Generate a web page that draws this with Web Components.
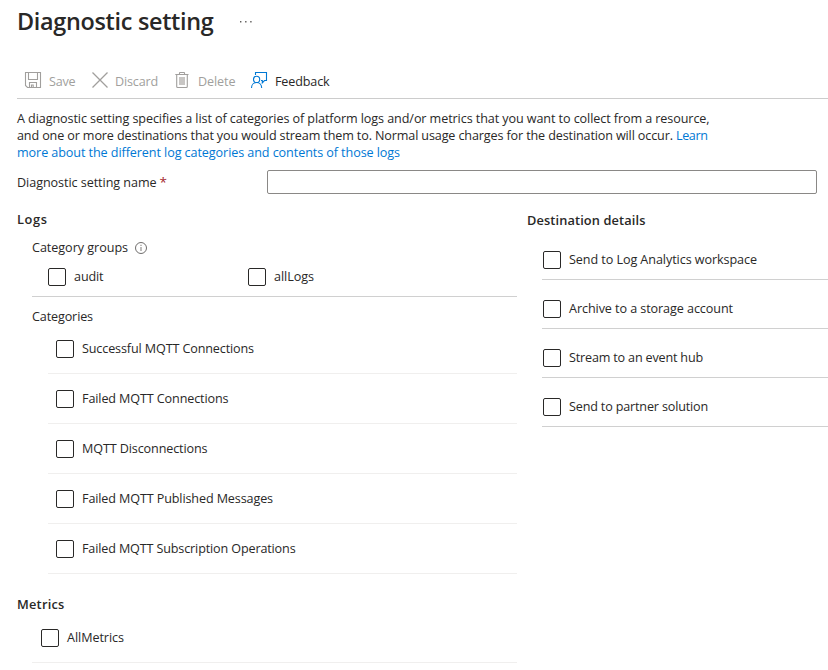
<!DOCTYPE html>
<html lang="en">
<head>
<meta charset="utf-8">
<title>Diagnostic setting</title>
<style>
html,body{margin:0;background:#fff}
body{width:828px;height:670px;overflow:hidden;font:12.6px/17px "Open Sans","Noto Sans",sans-serif;color:#292827}
</style>
</head>
<body>
<diagnostic-page></diagnostic-page>
<script>
const define = (name, html, setup) => customElements.define(name, class extends HTMLElement {
  constructor() {
    super();
    this.attachShadow({mode: 'open'}).innerHTML = html;
  }
  connectedCallback() { if (setup) setup(this, this.shadowRoot); }
});

// One line of text, tracked so that it fills the advance width given in "w".
define('ui-text', `<style>
:host{display:inline-block;white-space:pre;flex:none}
</style><span><slot></slot></span>`, (el, root) => {
  const span = root.querySelector('span');
  const w = +el.getAttribute('w');
  const natural = span.getBoundingClientRect().width;
  el.style.width = w + 'px';
  span.style.letterSpacing = ((w - natural) / el.textContent.length) + 'px';
});

define('ui-icon', `<style>
:host{display:block;flex:none}
svg{display:block;fill:none;overflow:visible}
</style><svg></svg>`, (el, root) => {
  const shapes = {
    save: [16, '<path d="M.5.5h15v15h-13l-2-2zM3.5.8v6.7h9V.8M4.5 15.3v-4.8h7v4.8M6.5 15.3v-2.3h1.7v2.3" stroke="#a19f9d" stroke-width="1.1"/>'],
    discard: [16, '<path d="M.5.5l15 15M15.5.5l-15 15" stroke="#a19f9d" stroke-width="1.3"/>'],
    trash: [14, '<path d="M.3 2.5h13.2M4.5 2.3V1q0-.5.5-.5h4q.5 0 .5.5v1.3M1.7 2.7V14.5q0 1 1 1h8.6q1 0 1-1V2.7" stroke="#a19f9d" stroke-width="1.1"/><path d="M4 5h6v8H4z" fill="#c8c6c4"/>'],
    feedback: [16, '<path d="M4.5 3V.5h11v8h-2l-2.2 2.3V8.5H10" stroke="#0078d4" stroke-width="1.1"/><circle cx="5.6" cy="7.4" r="3.1" stroke="#0078d4" stroke-width="1.1"/><path d="M.5 15.9c.2-7.2 10-7.2 10.2 0" stroke="#0078d4" stroke-width="1.1"/>'],
    info: [12, '<circle cx="6" cy="6" r="5.5" stroke="#605e5c" stroke-width=".9"/><path d="M6 5v4M6 2.8v1.1" stroke="#8a8886" stroke-width="1.1"/>'],
    more: [12, '<path d="M0 0h1.4v1.4H0zM5.1 0h1.4v1.4H5.1zM10.2 0h1.4v1.4h-1.4z" fill="#605e5c"/>']
  };
  const [w, art] = shapes[el.getAttribute('name')];
  const h = {info: 12, more: 2}[el.getAttribute('name')] || 16;
  const svg = root.querySelector('svg');
  svg.setAttribute('width', w);
  svg.setAttribute('height', h);
  svg.setAttribute('viewBox', `0 0 ${w} ${h}`);
  svg.innerHTML = art;
});

define('ui-check', `<style>
:host{display:flex;align-items:flex-start}
i{box-sizing:border-box;width:18px;height:18px;border:1px solid #292827;border-radius:2px;margin-right:8px;flex:none}
</style><i></i><slot></slot>`);

define('ui-command', `<style>
:host{display:flex;align-items:flex-start;color:#a19f9d}
:host([active]){color:#292827}
::slotted(ui-text){margin-top:1px}
</style><slot></slot>`);

define('ui-row', `<style>
:host{display:block;box-sizing:border-box;border-bottom:1px solid #f0efee}
:host([strong]){border-color:#d0d0d0}
</style><slot></slot>`);

define('ui-heading', `<style>
:host{display:block;height:17px;font-weight:600;font-size:12.8px}
</style><slot></slot>`);

define('diagnostic-page', `<style>
:host{display:block;height:670px}
header{display:flex;height:72px;padding-left:17px;box-sizing:border-box}
h1{margin:5px 26.5px 0 0;font-size:23.4px;line-height:32px;font-weight:600;flex:none}
header ui-icon{margin-top:21px}
nav{display:flex;height:27px;box-sizing:border-box;margin-left:17px;border-bottom:1px solid #ccc;padding-left:8px}
nav ui-icon{margin-right:8px}
.intro{margin:11px 0 0 17px;height:51px}
.intro div{height:17px;display:flex}
a{color:#0078d4;text-decoration:none;display:block}
.name{display:grid;grid-template-columns:250px 1fr;margin:9px 11px 0 17px;height:24px}
.caption{display:flex;padding-top:4px}
.caption b{font-weight:400;color:#a4262c;margin-left:3px;font-size:13.5px}
.field{border:1px solid #8a8886;border-radius:2px}
main{display:grid;grid-template-columns:517px 1fr}
.left{padding:17px 0 0 17px}
.right{padding:18px 0 0 10px}
.groups{margin:11px 0 0 15px;height:58px}
.label{display:flex;height:17px}
.label ui-icon{margin:3px 0 0 7px}
.pair{display:grid;grid-template-columns:200px 1fr;padding:12px 0 0 16px}
.cats{margin:11px 0 0 15px}
.list{margin:0 0 22px 16px}
.list ui-row{height:50px;padding:16px 0 0 8px}
.list ui-row:first-child{height:49px;padding-top:15px}
.metric{margin:7px 0 0 15px;height:43px;padding:9px 0 0 9px}
.dest{margin:2px 0 0 15px}
.dest ui-row{height:49px;padding:20px 0 0 1px}
.dest ui-row:first-child{height:50px;padding-top:21px;margin-top:-1px}
</style>
<header><h1><ui-text w="196.5">Diagnostic setting</ui-text></h1><ui-icon name="more"></ui-icon></header>
<nav>
<ui-command style="width:67px"><ui-icon name="save"></ui-icon><ui-text w="26.5">Save</ui-text></ui-command>
<ui-command style="width:83px"><ui-icon name="discard" style="margin-right:7px"></ui-icon><ui-text w="43">Discard</ui-text></ui-command>
<ui-command style="width:76px"><ui-icon name="trash" style="margin-right:9px"></ui-icon><ui-text w="37.5">Delete</ui-text></ui-command>
<ui-command active><ui-icon name="feedback"></ui-icon><ui-text w="54.5">Feedback</ui-text></ui-command>
</nav>
<div class="intro">
<div><ui-text w="692.5">A diagnostic setting specifies a list of categories of platform logs and/or metrics that you want to collect from a resource,</ui-text></div>
<div><ui-text w="659">and one or more destinations that you would stream them to. Normal usage charges for the destination will occur. </ui-text><a><ui-text w="31.5">Learn</ui-text></a></div>
<div><a><ui-text w="383">more about the different log categories and contents of those logs</ui-text></a></div>
</div>
<div class="name"><div class="caption"><ui-text w="139.5">Diagnostic setting name</ui-text><b>*</b></div><div class="field"></div></div>
<main>
<section class="left">
<ui-heading><ui-text w="30.5">Logs</ui-text></ui-heading>
<ui-row class="groups" strong>
<div class="label"><ui-text w="96">Category groups</ui-text><ui-icon name="info"></ui-icon></div>
<div class="pair"><ui-check><ui-text w="29.5">audit</ui-text></ui-check><ui-check><ui-text w="40">allLogs</ui-text></ui-check></div>
</ui-row>
<div class="cats"><div class="label"><ui-text w="61">Categories</ui-text></div>
<div class="list">
<ui-row><ui-check><ui-text w="172">Successful MQTT Connections</ui-text></ui-check></ui-row>
<ui-row><ui-check><ui-text w="146.5">Failed MQTT Connections</ui-text></ui-check></ui-row>
<ui-row><ui-check><ui-text w="125.5">MQTT Disconnections</ui-text></ui-check></ui-row>
<ui-row><ui-check><ui-text w="191">Failed MQTT Published Messages</ui-text></ui-check></ui-row>
<ui-row><ui-check><ui-text w="213.5">Failed MQTT Subscription Operations</ui-text></ui-check></ui-row>
</div></div>
<ui-heading><ui-text w="47.5">Metrics</ui-text></ui-heading>
<ui-row class="metric"><ui-check><ui-text w="57">AllMetrics</ui-text></ui-check></ui-row>
</section>
<section class="right">
<ui-heading><ui-text w="118.5">Destination details</ui-text></ui-heading>
<div class="dest">
<ui-row strong><ui-check><ui-text w="188">Send to Log Analytics workspace</ui-text></ui-check></ui-row>
<ui-row strong><ui-check><ui-text w="164">Archive to a storage account</ui-text></ui-check></ui-row>
<ui-row strong><ui-check><ui-text w="134">Stream to an event hub</ui-text></ui-check></ui-row>
<ui-row strong><ui-check><ui-text w="139">Send to partner solution</ui-text></ui-check></ui-row>
</div>
</section>
</main>`);
</script>
</body>
</html>
